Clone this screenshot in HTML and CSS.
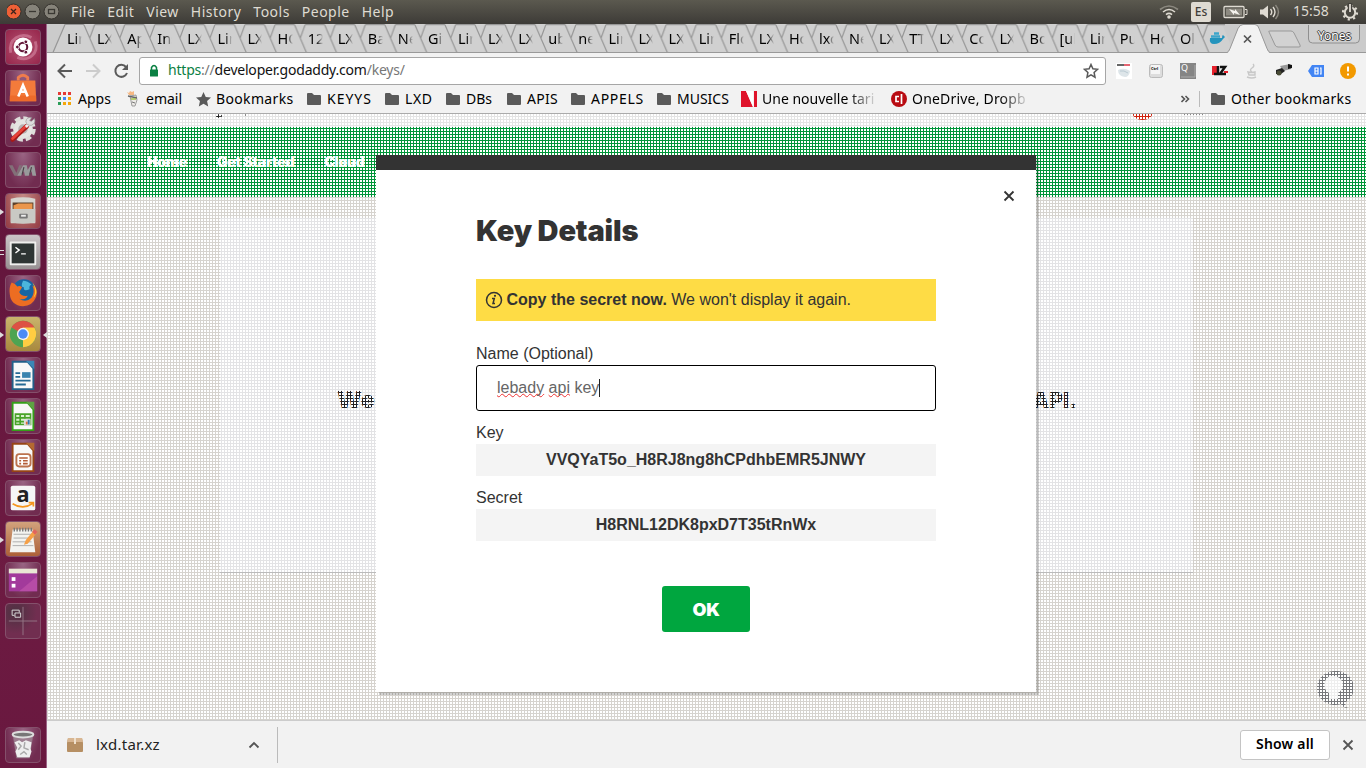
FILE: index.html
```html
<!DOCTYPE html>
<html lang="en">
<head>
<meta charset="utf-8">
<title>Key Details</title>
<link rel="stylesheet" href="styles.css">
</head>
<body>
<div class="desktop">
<header class="panel">
  <svg class="wm" width="52" height="24" viewBox="0 0 52 24"><circle cx="6.500" cy="11.500" r="7.500" fill="#ee6036" stroke="#35322d"/><path d="M4 9l5 5M9 9l-5 5" stroke="#3b231b" stroke-width="1.300"/><circle cx="25.500" cy="11.500" r="7.500" fill="#86837a" stroke="#35322d"/><path d="M22 11.500h7" stroke="#3a3833" stroke-width="1.300"/><circle cx="44.500" cy="11.500" r="7.500" fill="#86837a" stroke="#35322d"/><rect x="41.500" y="9.500" width="6" height="4" fill="none" stroke="#3a3833" stroke-width="1.300"/></svg>
  <nav class="menu"><span>File</span><span>Edit</span><span>View</span><span>History</span><span>Tools</span><span>People</span><span>Help</span></nav>
  <div class="status">
    <svg width="20" height="24" viewBox="0 0 20 24" fill="none" stroke="#dfdbd2" stroke-width="1.600"><path d="M1 9.500q9-7 18 0" stroke="#8b887f"/><path d="M4 12q6-5 12 0M7 14.700q3-2.500 6 0"/><circle cx="10" cy="17" r="1" fill="#dfdbd2"/></svg>
    <b class="kb">Es</b>
    <svg class="bat" width="25" height="24" viewBox="0 0 25 24"><rect x="1" y="6.500" width="20" height="11" rx="1" fill="#55534b" stroke="#dfdbd2" stroke-width="1.300"/><rect x="3" y="8.500" width="16" height="7" fill="#8d8a81"/><path d="M22 9.500h2v5h-2" fill="none" stroke="#dfdbd2"/><path d="M6 9l6 2 0-2 5 6-6-2v2z" fill="#f5f3ee"/></svg>
    <svg class="vol" width="21" height="24" viewBox="0 0 21 24"><path d="M1 9.500h3l5-4v13l-5-4H1z" fill="#dfdbd2"/><path d="M11.500 9q2.500 3 0 6M14 7q4 5 0 10" fill="none" stroke="#dfdbd2" stroke-width="1.400"/><path d="M16.500 5q6 7 0 14" fill="none" stroke="#8b887f" stroke-width="1.400"/></svg>
    <span class="clock">15:58</span>
    <svg width="18" height="24" viewBox="0 0 18 24"><circle cx="9" cy="12.500" r="5.200" fill="none" stroke="#dfdbd2" stroke-width="2"/><circle cx="9" cy="12.500" r="7" fill="none" stroke="#dfdbd2" stroke-width="2.200" stroke-dasharray="2.200 3.300"/><path d="M9 3v9" stroke="#44423c" stroke-width="4.500"/><path d="M9 4v8" stroke="#dfdbd2" stroke-width="1.800"/></svg>
  </div>
</header>
<div class="main">
<aside class="launcher">
  <div class="tile dash"><svg viewBox="0 0 36 36"><path d="M5 24C2 9 16 2 27 8M31 12c4 13-7 22-19 17" fill="none" stroke="#d789a4" stroke-width="3" opacity=".6"/><circle cx="18" cy="18" r="10" fill="#fff"/><circle cx="18" cy="18" r="4.500" fill="none" stroke="#611537" stroke-width="2.200"/><g fill="#611537" stroke="#fff"><circle cx="12" cy="18" r="2"/><circle cx="21" cy="12.500" r="2"/><circle cx="21" cy="23.500" r="2"/></g></svg></div>
  <div class="tile"><svg viewBox="0 0 36 36"><path d="M13 10V7q5-5 10 0v3" fill="none" stroke="#ef7c4c" stroke-width="3"/><path d="M5 10h26l1 22H4z" fill="#f47b3b"/><path d="M4 26h28v6H4z" fill="#ed6b2b"/><path d="M13 27l5-12 5 12M14 22h8" fill="none" stroke="#fff" stroke-width="2.700"/></svg></div>
  <div class="tile"><svg viewBox="0 0 36 36"><circle cx="18" cy="18" r="10.500" fill="#e5e5e3"/><circle cx="18" cy="18" r="11.500" fill="none" stroke="#dededb" stroke-width="4" stroke-dasharray="6 3.030"/><circle cx="18" cy="18" r="5" fill="#b5b1b1"/><path d="M7 29l15-14" stroke="#a81916" stroke-width="5" stroke-linecap="round"/><path d="M7 28l14-13" stroke="#e74239" stroke-width="3" stroke-linecap="round"/><path d="M21 16l4-4" stroke="#eee" stroke-width="3"/><path d="M30 7l-3 3-2-1 2-3q-5-1-6 4 1 5 6 4 5-2 3-7" fill="#ddd" stroke="#999" stroke-width=".7"/></svg></div>
  <div class="tile"><svg viewBox="0 0 36 36"><path d="M3 13h4l4 8 3-8h3l-4 11H9z" fill="#827078"/><path d="M12 24l6-11h4l1 5 3-5h4l2 11h-4l-1-5-3 5h-4l-1-5-3 5z" fill="#999a9b"/><path d="M19 15l-2 8M27 15l-2 8" stroke="#4b4147" stroke-width="1.200"/></svg></div>
  <div class="tile files"><svg viewBox="0 0 36 36"><path d="M5 5q13-3 26 0v26H5z" fill="#d6d5cf"/><path d="M7 9h22v7H7z" fill="#5d4029"/><path d="M8 12l5-2h15v6H8z" fill="#eb964b"/><path d="M5 16h26v14q-13 3-26 0z" fill="#c9c9c4"/><rect x="14" y="21" width="9" height="5" rx="1" fill="#777"/><path d="M16 23h5" stroke="#eee" stroke-width="2"/></svg><i class="pip"></i></div>
  <div class="tile term"><svg viewBox="0 0 36 36"><rect x="4" y="7" width="28" height="25" rx="1" fill="#efefed"/><rect x="6" y="9" width="24" height="21" fill="#2e3534"/><path d="M10 13l4 3-4 3M16 20h5" fill="none" stroke="#fff" stroke-width="1.500"/></svg><i class="pip two"></i></div>
  <div class="tile"><svg viewBox="0 0 36 36"><circle cx="19" cy="16" r="12.500" fill="#1765a4"/><path d="M18 5q5 0 9 4-3 1-2 5-7 3-6-2-4 0-1-7" fill="#4bb5dc"/><path d="M6 7q4 1 6 4 3-1 5 1l-3 5q2 5 9 4-2 5-9 3 7 5 13-1 4-6 1-13 6 2 4 12-4 10-14 10Q5 31 4 19q-1-7 2-12" fill="#ed6d22"/><path d="M28 7q5 9 1 16 7-6-1-16" fill="#fbc52e"/></svg></div>
  <div class="tile chrome"><svg viewBox="0 0 36 36"><circle cx="18" cy="18" r="14" fill="#4da452"/><path d="M18 18L5.900 11A14 14 0 0 1 30.100 11z" fill="#dd5144"/><path d="M18 18L30.100 11A14 14 0 0 1 18 32z" fill="#ffcd42"/><path d="M18 11h12L24 21z" fill="#ffcd42"/><circle cx="18" cy="18" r="6.500" fill="#f3f3f3"/><circle cx="18" cy="18" r="5" fill="#4c8bf5"/></svg><i class="pip"></i><i class="pip right"></i></div>
  <div class="tile"><svg viewBox="0 0 36 36"><path d="M7 4h16l6 7v22H7z" fill="#f8f8f8" stroke="#225f89" stroke-width="2"/><path d="M21 3h9v9z" fill="#3b87b6"/><path d="M10 16h5M10 20h5M10 24h16M10 28h11" stroke="#246994" stroke-width="2"/><rect x="17" y="15" width="9" height="6" fill="#3983ae"/></svg></div>
  <div class="tile"><svg viewBox="0 0 36 36"><path d="M7 4h16l6 7v22H7z" fill="#f8f8f8" stroke="#34a018" stroke-width="2"/><path d="M21 3h9v9z" fill="#5ea343"/><path d="M10 16h16v11H10zM10 20h16M10 24h16M15 16v11M20 16v11" fill="#d9efce" stroke="#48a328" stroke-width="1.700"/><rect x="19" y="21" width="7" height="7" fill="#ddd"/><path d="M22 27v-3" stroke="#e66c35" stroke-width="2"/><path d="M24 27v-5" stroke="#3275ac" stroke-width="2"/></svg></div>
  <div class="tile"><svg viewBox="0 0 36 36"><path d="M7 4h16l6 7v22H7z" fill="#f8f8f8" stroke="#974415" stroke-width="2"/><path d="M21 3h9v9z" fill="#b46931"/><rect x="11" y="15" width="15" height="13" rx="3" fill="#fff" stroke="#bb714c" stroke-width="2"/><path d="M14 19h9M14 22h2M18 22h5M14 25h2M18 25h5" stroke="#b45c37" stroke-width="1.700"/></svg></div>
  <div class="tile"><svg viewBox="0 0 36 36"><rect x="5" y="5" width="26" height="26" rx="2" fill="#f6f6f6"/><text x="18" y="22" text-anchor="middle" class="amz">a</text><path d="M7 24q11 7 21 0M24 23h5v4" fill="none" stroke="#f6961e" stroke-width="1.800"/></svg></div>
  <div class="tile note"><svg viewBox="0 0 36 36"><path d="M7 8h21l3 24H4z" fill="#f3f3f0"/><path d="M8 13h19M8 17h19M7 21h20M7 25h22" stroke="#aaa"/><path d="M8 8h21" stroke="#777" stroke-width="4" stroke-dasharray="1.500 1.500"/><path d="M19 24l2-5L30 8l3 3-10 12z" fill="#f6a046"/><path d="M29 9l3 3" stroke="#df655f" stroke-width="4"/></svg><i class="pip"></i></div>
  <div class="tile"><svg viewBox="0 0 36 36"><rect x="3" y="7" width="30" height="23" fill="#a23a9b"/><path d="M14 30L33 14v16z" fill="#c559ad" opacity=".6"/><rect x="3" y="6" width="30" height="5" fill="#e9e7d5"/><rect x="6" y="15" width="4" height="4" fill="#fff"/><rect x="6" y="22" width="4" height="4" fill="#fff"/></svg></div>
  <div class="tile work"><svg viewBox="0 0 36 36" fill="none" stroke="#957687"><path d="M18 3v30M3 18h30"/><path d="M14 9V6.500H6.500V12H9M9.500 9.500h6V14h-6z" stroke="#ddd"/></svg></div>
  <div class="tile trash"><svg viewBox="0 0 36 36"><path d="M7 6l4 26h14l4-26z" fill="#aaa0a6" opacity=".6"/><path d="M9 15l5-2 3 2 4-2 6 2-1 7 1 3-2 6H12l-2-6 2-4z" fill="#eee"/><path d="M13 16l3 3-3 4M20 15l-1 6 5 2M15 28l4-3 3 3" fill="none" stroke="#a8a8a8" stroke-width="1.500"/><ellipse cx="18" cy="7" rx="11" ry="3" fill="#777" stroke="#ddd" stroke-width="2"/></svg></div>
</aside>
<section class="browser">
  <div class="tabs">
    <svg class="edges" width="1319" height="29" viewBox="47 24 1319 29">
      <defs><pattern id="tb" x="53" y="24" width="30.080" height="29" patternUnits="userSpaceOnUse"><path d="M11.500 .700h19.500M11.500 .700L6.500 14.500M.900 .700l12 28M31 .700l12 28M-19 .700H.900" fill="none" stroke="#979797" stroke-width="1.200"/></pattern></defs>
      <path d="M53 53L65 24H1222L1234 53z" fill="#d0d0d0"/><path d="M53 52.500L65 24.500H84" fill="none" stroke="#979797" stroke-width="1.200"/><rect x="83" y="24" width="1142" height="29" fill="url(#tb)"/>
      <path d="M47 52.500h1319" stroke="#999"/>
      <path d="M1227 53q2-1 3-4l8-20q2-4 5-4h12q3 0 4 4l8 20q1 3 3 4z" fill="#f2f2f2"/><path d="M1227 52.500q2-1 3-4l8-20q2-4 5-4h12q3 0 4 4l8 20q1 3 3 4" fill="none" stroke="#999"/>
      <path d="M1244 35.500l7 7M1251 35.500l-7 7" stroke="#555" stroke-width="1.700"/>
      <path d="M1269 32q-1-1 1-1h21q2 0 3 2l6 12q1 2-1 2h-21q-2 0-3-2z" fill="#d2d2d2" stroke="#999"/>
      <path d="M1308.500 25v14q0 4 4 4h43q4 0 4-4V25" fill="#cfcfcf" stroke="#8f8f8f"/>
      <path d="M1210 38h12q0-3 1-3l2 2-2 2q-3 5-9 5-5 0-4-6" fill="#2494bd"/><path d="M1211 36.500h9M1214 33.500h5" stroke="#3ca5ca" stroke-width="2.500"/>
    </svg>
    <div class="names"><span>Lin</span><span>LXD</span><span>App</span><span>Ins</span><span>LXD</span><span>Lin</span><span>LXD</span><span>HO</span><span>12.</span><span>LXD</span><span>Bas</span><span>Net</span><span>Git</span><span>Lin</span><span>LXD</span><span>LXD</span><span>ubu</span><span>net</span><span>Lin</span><span>LXD</span><span>LXD</span><span>Lin</span><span>Flo</span><span>LXD</span><span>Ho</span><span>lxc</span><span>Net</span><span>LXD</span><span>TTI</span><span>LXD</span><span>Co</span><span>LXD</span><span>Bo</span><span>[ub</span><span>Lin</span><span>Pub</span><span>Ho</span><span>Ol</span></div>
    <span class="user">Yones</span>
  </div>
  <div class="toolbar">
    <svg class="nav" width="92" height="32" viewBox="0 0 92 32" fill="none" stroke="#5a5a5a" stroke-width="2"><path d="M25 16H12M18 9.500L11.500 16l6.500 6.500"/><path d="M39 16h13M46 9.500l6.500 6.500-6.500 6.500" stroke="#ccc"/><path d="M79 12a6 6 0 1 0 1 6"/><path d="M81 9v6h-6z" fill="#5a5a5a" stroke="none"/></svg>
    <div class="omni">
      <svg width="10" height="14" viewBox="0 0 10 14"><path d="M2.500 6V3.500q2.500-4 5 0V6" fill="none" stroke="#0b8043" stroke-width="1.500"/><rect x="1" y="5.500" width="8" height="7" rx=".5" fill="#0b8043"/></svg>
      <span class="url"><em>https</em><i>://</i>developer.godaddy.com<i>/keys/</i></span>
      <svg class="fav" width="16" height="16" viewBox="0 0 16 16"><path d="M8 1.500l1.900 4.300 4.600.5-3.400 3.200.9 4.700L8 11.800l-4 2.400.9-4.700L1.500 6.300l4.600-.5z" fill="none" stroke="#5a5a5a" stroke-width="1.500"/></svg>
    </div>
    <div class="exts">
      <svg viewBox="0 0 16 16"><path fill="#fff" d="M0 0h16v16H0z"/><path d="M1 2h7" stroke="#333" stroke-width="1.500"/><path d="M8 2h6" stroke="#d34" stroke-width="1.500"/><path d="M2 7q6-3 12 1-1 6-5 6-7-1-7-7" fill="#dde5e9"/><path d="M4 8q4-1 8 2" fill="none" stroke="#b9c9d2"/></svg>
      <svg viewBox="0 0 16 16"><rect x="1.500" y="1.500" width="13" height="13" rx="2" fill="#ddd" stroke="#bbb"/><path d="M3 2h9v9H3z" fill="#f5f5f5"/><text x="3" y="7" class="tiny">Ctrl</text></svg>
      <svg viewBox="0 0 16 16"><path fill="#858585" d="M0 0h16v16H0z"/><path d="M1 14h14V2" fill="none" stroke="#aaa"/><text x="1" y="8" class="q">Q</text></svg>
      <svg viewBox="0 0 16 16"><path d="M0 3h5v9H0z" fill="#e5202b"/><path d="M6 3v8H2M8 4h5l-5 7h6" fill="none" stroke="#111" stroke-width="2.500"/><path d="M12 9h4" stroke="#e5202b" stroke-width="2"/></svg>
      <svg viewBox="0 0 16 16" fill="none" stroke="#c8c8c8"><path d="M9 1q2 2-1 4t0 4M4 9q4 1 7 0v3H5zM3 14q5 2 9 0" stroke-width="1.400"/></svg>
      <svg viewBox="0 0 16 16"><path d="M4 3l10-2 1 5-8 2z" fill="#999"/><path d="M12 1l4 1v3l-4 1z" fill="#111"/><path d="M0 7l6-2 3 3-4 3H0z" fill="#222"/><circle cx="3" cy="10" r="2.500" fill="#494b35"/></svg>
      <svg viewBox="0 0 16 16"><path d="M0 8l4-6h12v12H4z" fill="#4285f4"/><path d="M7 5h3v6H7zM7 8h3M12 5h1v6h-1" fill="none" stroke="#fff" stroke-width="1.200"/></svg>
      <svg viewBox="0 0 16 16"><circle cx="8" cy="8" r="8" fill="#f29900"/><path d="M8 3.500v5M8 10.500v2" stroke="#fff" stroke-width="2"/></svg>
    </div>
  </div>
  <div class="bookmarks">
    <svg width="0" height="0" class="defs"><symbol id="fold" viewBox="0 0 15 14"><path d="M0 2q0-1 1-1h4l2 2h6q1 0 1 1v8q0 1-1 1H1q-1 0-1-1z" fill="#5a5a5a"/></symbol></svg>
    <span class="bm apps"><svg width="14" height="14" viewBox="0 0 14 14"><path d="M0 0h3v3H0zM5 0h3v3H5zM10 0h3v3h-3z" fill="#e53935"/><path d="M0 5h3v3H0zM0 10h3v3H0z" fill="#2a9d58"/><path d="M5 5h3v3H5z" fill="#4285f4"/><path d="M10 5h3v3h-3zM5 10h3v3H5zM10 10h3v3h-3z" fill="#f4a70b"/></svg>Apps</span>
    <span class="bm mail"><svg width="14" height="16" viewBox="0 0 14 16"><path d="M1 1l2 1 1-2 2 1 2-1v4H3z" fill="#f6b883"/><path d="M4 5l6-1 1 5-2 6H6z" fill="#eceae6" stroke="#888" stroke-width=".8"/><path d="M2 5l9 2" stroke="#666" stroke-width="1.300"/><path d="M5 8h5" stroke="#9b3" stroke-width="1.300"/><path d="M6 11l3 1" stroke="#777"/></svg>email</span>
    <span class="bm book"><svg width="15" height="15" viewBox="0 0 16 16"><path d="M8 0l2.400 5.300 5.600.6-4.200 3.800L13 15.500l-5-3-5 3 1.200-5.800L0 5.900l5.600-.6z" fill="#5a5a5a"/></svg>Bookmarks</span>
    <span class="bm keyys"><svg width="15" height="14"><use href="#fold"/></svg>KEYYS</span>
    <span class="bm lxd"><svg width="15" height="14"><use href="#fold"/></svg>LXD</span>
    <span class="bm dbs"><svg width="15" height="14"><use href="#fold"/></svg>DBs</span>
    <span class="bm apis"><svg width="15" height="14"><use href="#fold"/></svg>APIS</span>
    <span class="bm appels"><svg width="15" height="14"><use href="#fold"/></svg>APPELS</span>
    <span class="bm musics"><svg width="15" height="14"><use href="#fold"/></svg>MUSICS</span>
    <span class="bm une"><svg width="16" height="16" viewBox="0 0 16 16"><path d="M0 0h5l7 16H0zM13 0h3v16h-3z" fill="#df142b"/><path d="M5 0h7v16z" fill="#fff"/></svg><span class="fade">Une nouvelle tari</span></span>
    <span class="bm one"><svg width="16" height="16" viewBox="0 0 16 16"><circle cx="8" cy="8" r="8" fill="#b90b12"/><path d="M8 5.500H5v5h3M10.500 3v10" fill="none" stroke="#fff" stroke-width="1.700"/></svg><span class="fade wide">OneDrive, Dropb</span></span>
    <span class="more"><svg width="9" height="8" viewBox="0 0 9 8"><path d="M.5 1L3.500 4 .5 7M4.500 1l3 3-3 3" fill="none" stroke="#555" stroke-width="1.600"/></svg></span>
    <span class="bm other"><svg width="15" height="14"><use href="#fold"/></svg>Other bookmarks</span>
  </div>
  <div class="page">
    <div class="topline"><svg width="1319" height="13" viewBox="47 114 1319 13"><path d="M139 114v1M245 114v2M313 114v2" stroke="#333"/><path d="M216 116h6M218 114v4" stroke="#111" stroke-width="1.500"/><path d="M1102 114v1" stroke="#d67424"/><ellipse cx="1142.500" cy="113" rx="10" ry="7" fill="#d0210c"/><path d="M1183 114.500h20" stroke="#888" stroke-dasharray="2 1"/></svg></div>
    <div class="greenbar"><span>Home</span><span>Get Started</span><span>Cloud</span></div>
    <div class="card"><span>We</span><span class="api">API.</span></div>
    <svg class="chat" width="38" height="38" viewBox="0 0 38 38"><path d="M19 0a18 17 0 1 0 7 33q2 4 7 4-4-2-2-6A18 17 0 0 0 19 0" fill="#77787b"/><path d="M19 5a8 9 0 0 0-5 17v6h9v-6a9 9 0 0 0-4-17" fill="#eee"/></svg>
    <svg class="mesh" width="1319" height="606"><defs><pattern id="sq" width="3" height="3" patternUnits="userSpaceOnUse"><rect x="1" y="0" width="2" height="2" fill="#fff" shape-rendering="crispEdges"/></pattern></defs><rect width="1319" height="606" fill="url(#sq)"/></svg>
    <section class="modal">
      <svg class="x" width="12" height="12" viewBox="0 0 12 12"><path d="M1.500 1.500l9 9M10.500 1.500l-9 9" stroke="#333" stroke-width="1.800"/></svg>
      <h1>Key Details</h1>
      <p class="alert"><svg width="18" height="18" viewBox="0 0 18 18"><circle cx="9" cy="9" r="7.500" fill="none" stroke="#333" stroke-width="1.500"/><path d="M7 7.500h2.300L8 12.500h2" fill="none" stroke="#333" stroke-width="1.500"/><circle cx="10" cy="4.800" r="1.100" fill="#333"/></svg><span><b>Copy the secret now.</b> We won't display it again.</span></p>
      <label>Name (Optional)</label>
      <div class="field"><u>lebady</u>&nbsp;<u>api</u>&nbsp;key<i></i></div>
      <label class="second">Key</label>
      <div class="value">VVQYaT5o_H8RJ8ng8hCPdhbEMR5JNWY</div>
      <label class="third">Secret</label>
      <div class="value">H8RNL12DK8pxD7T35tRnWx</div>
      <button class="ok">OK</button>
    </section>
  </div>
  <footer class="downloads">
    <div class="file"><svg width="16" height="16" viewBox="0 0 16 16"><path d="M1 1h14l1 5v8q0 1-1 1H1q-1 0-1-1V6z" fill="#b68f63"/><path d="M1 1h14l1 4H0z" fill="#d8b692"/><path d="M7 1h2v6H7z" fill="#efe0cc"/></svg><span>lxd.tar.xz</span><svg class="up" width="12" height="8" viewBox="0 0 12 8"><path d="M1.500 6.500L6 2l4.500 4.500" fill="none" stroke="#555" stroke-width="1.800"/></svg></div>
    <button class="all">Show all</button>
    <svg class="dx" width="12" height="12" viewBox="0 0 12 12"><path d="M1.500 1.500l9 9M10.500 1.500l-9 9" stroke="#555" stroke-width="1.800"/></svg>
  </footer>
</section>
</div>
</div>
</body>
</html>
```
FILE: styles.css
```css
* { box-sizing: border-box; }
body { margin: 0; overflow: hidden; font-family: "Noto Sans", "Open Sans", sans-serif; font-size: 14px; color: #111; }
svg { display: block; flex: none; }
.desktop { width: 1366px; height: 768px; display: flex; flex-direction: column; }
.panel { height: 24px; flex: none; display: flex; align-items: center; background: linear-gradient(#5b594f, #3d3b37); color: #dfdbd2; padding-left: 7px; }
.menu { display: flex; gap: 12px; margin-left: 12px; line-height: 24px; letter-spacing: .48px; }
.status { display: flex; align-items: center; margin-left: auto; padding-right: 7px; }
.kb { width: 20px; height: 20px; margin-left: 12px; border-radius: 2px; background: #dfdbd2; color: #3f3d38; font-size: 12px; font-weight: 500; line-height: 20px; text-align: center; }
.bat { margin-left: 12px; }
.vol { margin-left: 11px; }
.clock { width: 37px; margin: 0 11px 0 13px; line-height: 22px; height: 24px; }
.main { display: flex; height: 744px; }
.launcher { width: 47px; flex: none; display: flex; flex-direction: column; gap: 5px; padding: 5px 0 0 5px; background: linear-gradient(#5e1239, #6d1b42 75%, #69183f); border-right: 1px solid #9b6385; }
.tile { position: relative; width: 36px; height: 36px; flex: none; border-radius: 4px; border: 1px solid #84506b; background: radial-gradient(ellipse at 50% 0, #9a6584, #712c50 75%); }
.tile svg { width: 34px; height: 34px; }
.dash { background: radial-gradient(#b65674, #96254b); }
.files { background: radial-gradient(ellipse at 50% 0, #c48a85, #943b43); }
.term { background: linear-gradient(#cbc4c7, #989293); }
.chrome { background: linear-gradient(#c9b36c, #a8893e); }
.note { background: linear-gradient(#d1a27c, #ad6038); }
.work { background: radial-gradient(circle at 28% 25%, #4c3241, #712e50 60%); }
.trash { margin-top: 83px; }
.amz { font: bold 23px "Open Sans", sans-serif; fill: #222; }
.pip { position: absolute; left: -6px; top: 15px; border: 3px solid transparent; border-left: 4px solid #ddd; border-right: 0; }
.right { left: 37px; border-left: 0; border-right: 4px solid #ddd; }
.two { height: 5px; width: 4px; border: solid #ddd; border-width: 1px 0; }
.browser { width: 1319px; display: flex; flex-direction: column; background: #f2f2f2; }
.tabs { display: grid; height: 29px; flex: none; background: #cbcbcb; }
.tabs > * { grid-area: 1 / 1; }
.names { display: flex; padding-left: 20px; line-height: 29px; color: #000; font-size: 14.5px; }
.names span { width: 15px; margin-right: 15.08px; flex: none; overflow: hidden; white-space: nowrap; -webkit-mask-image: linear-gradient(90deg, #000 55%, transparent); mask-image: linear-gradient(90deg, #000 55%, transparent); }
.user { justify-self: end; width: 51px; margin-right: 6px; color: #fff; font-size: 12px; line-height: 23px; text-align: center; text-shadow: 1px 0 #444, -1px 0 #444, 0 1px #444, 0 -1px #444; }
.toolbar { height: 32px; margin-top: 2px; flex: none; display: flex; align-items: center; }
.omni { width: 967px; height: 28px; display: flex; align-items: center; border: 1px solid #a6a6a6; border-radius: 3px; background: #fff; padding: 0 6px 0 9px; }
.url { margin-left: 9px; letter-spacing: -.21px; line-height: 22px; padding-bottom: 2px; color: #111; }
.url em { color: #0b8043; font-style: normal; }
.url i { color: #777; font-style: normal; }
.fav { margin-left: auto; }
.exts { display: flex; gap: 16px; margin-left: 10px; }
.exts svg { width: 16px; height: 16px; }
.tiny { font: bold 4px "Noto Sans", sans-serif; }
.q { font: 9px "Noto Sans", sans-serif; fill: #fff; }
.bookmarks { height: 27px; flex: none; display: flex; align-items: center; padding: 0 0 2px 11px; border-bottom: 1px solid #aaa; color: #000; line-height: 24px; }
.defs { position: absolute; }
.bm { display: flex; align-items: center; gap: 5px; flex: none; white-space: nowrap; }
.apps { width: 68px; gap: 6px; }
.mail { width: 70px; gap: 6px; }
.book { width: 111px; letter-spacing: .35px; }
.keyys { width: 78px; letter-spacing: 1px; }
.lxd, .dbs { width: 61px; }
.lxd { letter-spacing: .6px; }
.apis { width: 64px; letter-spacing: .3px; }
.appels { width: 86px; letter-spacing: .7px; }
.musics { width: 84px; letter-spacing: 0; }
.une { width: 150px; letter-spacing: 0; }
.fade { width: 116px; overflow: hidden; -webkit-mask-image: linear-gradient(90deg, #000 75%, transparent); mask-image: linear-gradient(90deg, #000 75%, transparent); }
.wide { width: 118px; letter-spacing: .2px; }
.more { width: 19px; margin-left: auto; height: 16px; display: flex; align-items: center; border-right: 1px solid #bbb; }
.other { width: 155px; margin-left: 11px; letter-spacing: .3px; }
.page { position: relative; height: 606px; flex: none; background: #d6d3ce; }
.topline { height: 13px; background: #e4e4e4; overflow: hidden; }
.greenbar { height: 70px; background: #009539; display: flex; gap: 30px; padding: 24px 0 0 100px; color: #fff; font: 900 14px/22px Inter, sans-serif; letter-spacing: -.25px; }
.card { width: 973px; height: 354px; margin: 21px 0 0 173px; display: flex; justify-content: space-between; align-items: center; padding: 10px 116px 0 117px; background: #e3e3e5; box-shadow: 0 1px 1px #bbb; color: #222; font: 900 23px Inter, sans-serif; letter-spacing: 0; }
.api { font-size: 21px; }
.chat { position: absolute; left: 1268px; top: 557px; }
.mesh { position: absolute; left: 0; top: 0; }
.modal { position: absolute; left: 329px; top: 41px; width: 660px; height: 537px; display: flex; flex-direction: column; padding: 19px 100px 0; background: #fff; border-top: 15px solid #333; box-shadow: 3px 3px 0 rgba(0, 0, 0, .18); color: #333; font: 16px "Liberation Sans", Arial, sans-serif; }
.x { align-self: flex-end; margin: 1px -79px 0 0; }
.modal h1 { margin: 11px 0 29px; height: 36px; white-space: nowrap; font: 900 29px/36px Inter, sans-serif; letter-spacing: -.15px; }
.alert { height: 42px; margin: 1px 0 22px; display: flex; align-items: center; gap: 3.500px; padding-left: 9px; background: #fedc45; }
.modal label { height: 22px; line-height: 22px; flex: none; }
.field { height: 46px; flex: none; display: flex; align-items: center; padding-left: 20px; border: 1px solid #000; border-radius: 3px; color: #666; }
.field u { text-decoration: underline wavy #e33 1px; text-underline-offset: 0; text-decoration-skip-ink: none; }
.field i { width: 1px; height: 18px; background: #222; }
.modal .second { margin-top: 11px; }
.modal .third { margin-top: 11px; }
.value { height: 32px; flex: none; background: #f4f4f4; font-weight: bold; line-height: 32px; text-align: center; }
.ok { width: 88px; height: 46px; margin: 45px auto 0; padding: 0; border: 0; border-radius: 3px; background: #00a63f; color: #fff; font: 900 18px Inter, sans-serif; letter-spacing: -.2px; }
.downloads { height: 48px; flex: none; display: flex; align-items: center; background: #f2f2f2; border-top: 1px solid #ccc; }
.file { width: 231px; height: 36px; display: flex; align-items: center; padding-left: 20px; border-right: 1px solid #bbb; color: #222; font-size: 15px; }
.file span { margin-left: 13px; letter-spacing: .25px; padding-bottom: 2px; }
.up { margin: 0 17px 0 auto; }
.all { width: 90px; height: 30px; margin-left: auto; padding: 0 0 3px; background: #fff; border: 1px solid #c4c4c4; border-radius: 3px; font: 600 14px "Noto Sans", sans-serif; letter-spacing: .2px; color: #000; }
.dx { margin: 0 12px; }
```
